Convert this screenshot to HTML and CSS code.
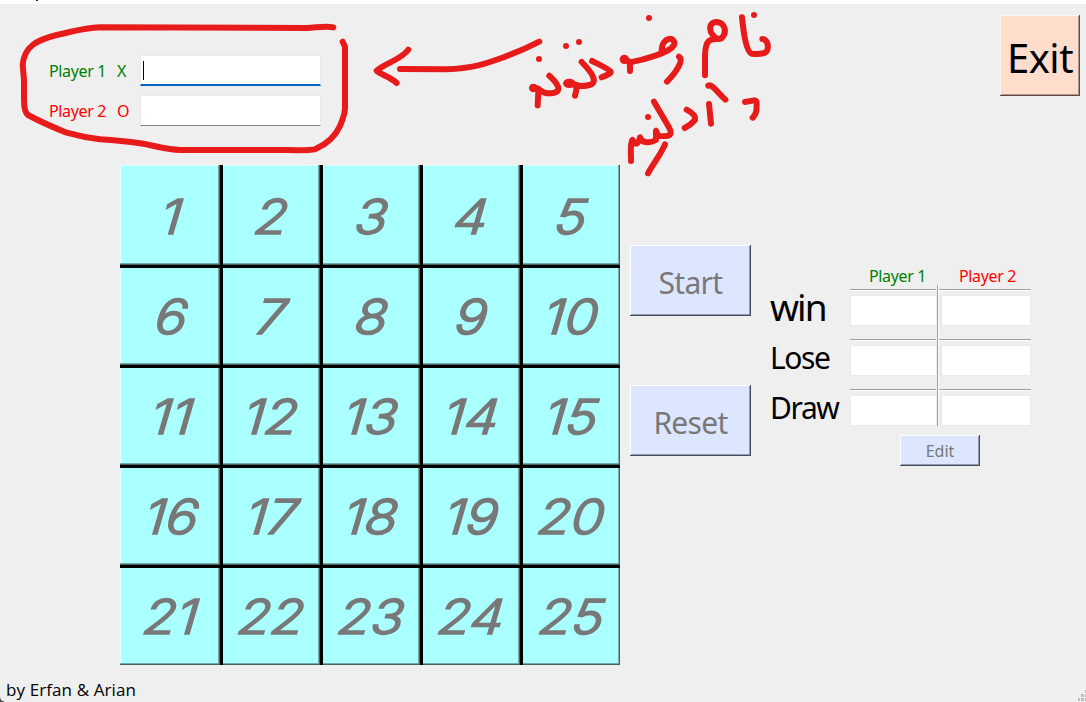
FILE: index.html
```html
<!DOCTYPE html>
<html lang="en">
<head>
<meta charset="utf-8">
<title>Tic Tac Toe</title>
<link rel="stylesheet" href="styles.css">
</head>
<body>
<div class="window">
  <div class="titlebar"><i class="title-tail"></i></div>
  <header class="top">
    <form class="names">
      <label class="name green"><span class="who">Player 1</span><span class="mark">X</span><span class="field focused"><i class="caret"></i></span></label>
      <label class="name red"><span class="who">Player 2</span><span class="mark">O</span><span class="field"></span></label>
    </form>
    <button class="btn exit"><span>Exit</span></button>
  </header>
  <main class="main">
    <div class="board">
      <div class="cell"><span>1</span></div><div class="cell"><span>2</span></div><div class="cell"><span>3</span></div><div class="cell"><span>4</span></div><div class="cell"><span>5</span></div>
      <div class="cell"><span>6</span></div><div class="cell"><span>7</span></div><div class="cell"><span>8</span></div><div class="cell"><span>9</span></div><div class="cell"><span>10</span></div>
      <div class="cell"><span>11</span></div><div class="cell"><span>12</span></div><div class="cell"><span>13</span></div><div class="cell"><span>14</span></div><div class="cell"><span>15</span></div>
      <div class="cell"><span>16</span></div><div class="cell"><span>17</span></div><div class="cell"><span>18</span></div><div class="cell"><span>19</span></div><div class="cell"><span>20</span></div>
      <div class="cell"><span>21</span></div><div class="cell"><span>22</span></div><div class="cell"><span>23</span></div><div class="cell"><span>24</span></div><div class="cell"><span>25</span></div>
    </div>
    <div class="actions">
      <button class="btn start"><span>Start</span></button>
      <button class="btn reset"><span>Reset</span></button>
    </div>
    <section class="score">
      <div class="row-names"><span class="win">win</span><span class="lose">Lose</span><span class="draw">Draw</span></div>
      <div class="table">
        <div class="heads"><span class="green">Player 1</span><span class="red">Player 2</span></div>
        <div class="pair"><i></i><i></i></div>
        <div class="pair"><i></i><i></i></div>
        <div class="pair"><i></i><i></i></div>
        <div class="divider"></div>
        <button class="btn edit"><span>Edit</span></button>
      </div>
    </section>
  </main>
  <footer class="status"><span>by Erfan &amp; Arian</span></footer>
  <i class="corner"></i>
  <svg class="grip" width="8" height="12" viewBox="0 0 8 12" fill="#bfbfbf"><path d="M7 0h1v3H7zM3 4h3v3H3zM7 4h1v3H7zM0 8h2v3H0zM3 8h3v3H3zM7 8h1v3H7z"/></svg>
  <svg class="ink" width="1086" height="702" viewBox="0 0 1086 702">
    <g transform="scale(.33333)">
      <path d="M1000 82C980 77 955 82 920 84L300 82C250 84 230 92 170 105C110 120 72 140 68 195L72 240V300Q72 336 84 345Q130 370 200 398Q250 412 300 418C350 421 380 424 420 430C470 438 500 449 540 450H860C910 451 930 451 945 448C990 428 1010 400 1020 378C1030 350 1035 345 1035 325V140L1028 125"/>
    </g>
    <g transform="translate(360) scale(.33333)">
      <path d="M120 207L260 208C340 205 380 190 430 172Q490 150 538 125M145 149C125 178 75 190 50 212C65 225 90 230 110 249"/>
      <path d="M568 227C604 260 605 280 565 280C540 280 542 262 518 262M535 275L533 316M665 186C713 235 715 258 665 258C640 258 648 248 623 250M648 258C652 275 645 280 645 287M696 183C765 217 765 215 725 232"/>
      <circle cx="618" cy="138" r="9"/><circle cx="657" cy="126" r="9"/><circle cx="537" cy="177" r="9"/><circle cx="520" cy="264" r="13"/><ellipse cx="628" cy="250" rx="19" ry="14"/>
    </g>
    <g transform="translate(600) scale(.33333)">
      <path d="M76 178C92 184 90 195 90 213M90 187C130 180 210 158 222 135C230 108 185 108 185 153M237 170C252 180 230 215 201 245M315 226V170C315 118 330 115 363 116C385 95 373 66 348 66C326 68 328 92 337 103C347 118 355 118 363 116M426 52C430 90 437 155 455 161C500 165 506 155 503 133C499 119 493 117 487 117"/>
      <path d="M325 257C335 251 350 275 376 299M327 312L333 371M260 329C280 340 288 350 285 360Q272 375 254 384M435 306L462 301Q471 301 470 309C470 330 470 342 458 353M162 305L206 380C220 405 210 410 180 408C168 405 172 398 168 392V420C150 430 125 430 120 412C118 423 112 434 105 430L97 420C90 430 93 450 93 483M195 433C185 460 160 490 144 520"/>
      <circle cx="147" cy="54" r="9"/><circle cx="462" cy="45" r="9"/><circle cx="144" cy="351" r="9"/><circle cx="73" cy="178" r="14"/>
    </g>
  </svg>
</div>
</body>
</html>
```
FILE: styles.css
```css
* { box-sizing: border-box; }
body { margin: 0; background: #efefef; font: 16px/20px "Noto Sans", sans-serif; color: #000; overflow: hidden; }
i { display: block; }
.window { position: relative; width: 1086px; height: 702px; overflow: hidden; background: #efefef; display: flex; flex-direction: column; }
.titlebar { height: 4px; flex: none; background: #fff; }
.title-tail { width: 2px; height: 1px; margin-left: 36px; background: #223; }
.green { color: #008000; }
.red { color: #f00; }
.top { height: 161px; flex: none; display: flex; justify-content: space-between; padding: 11px 6px 0 49px; }
.names { padding-top: 40px; display: flex; flex-direction: column; gap: 9px; }
.name { display: flex; height: 31px; align-items: center; }
.who { width: 68px; letter-spacing: -.35px; white-space: nowrap; }
.mark { width: 23px; }
.field { width: 181px; height: 31px; background: #fff; border: 1px solid #eaeaea; border-bottom: 1px solid #868686; }
.focused { border-bottom: 2px solid #0067c0; padding: 5px 0 0 2px; }
.caret { width: 1px; height: 19px; background: #000; }
.btn { border: 0; padding: 0; margin: 0; font: 30px/36px "Noto Sans", sans-serif; color: #787878; background: #dde6ff; display: flex; align-items: center; justify-content: center; box-shadow: inset -1px -1px #444c5c, inset 1px 1px #fff, inset -2px -2px #929bb0; }
.exit { width: 80px; height: 81px; padding-top: 4px; font-size: 40px; letter-spacing: -.5px; color: #000; background: #ffddcc; box-shadow: inset -1px -1px #5c4c44, inset 1px 1px #fff4ec, inset -2px -2px #b09488; }
.main { height: 500px; flex: none; display: flex; padding-left: 120px; }
.board { display: grid; grid-template: repeat(5, 100px) / repeat(5, 100px); }
.cell { background: #aff; display: flex; align-items: center; justify-content: center; padding: 3px 0 0 3px; color: #787878; font: italic 300 48px/60px Inter, sans-serif; box-shadow: inset 3px 3px #000, inset -1px -1px #446666, inset -2px -2px #72aaaa; }
.cell:nth-child(-n+5) { box-shadow: inset 3px 0 #000, inset -1px -1px #446666, inset -2px -2px #72aaaa, inset 0 1px #ddffff; }
.cell:nth-child(5n+1) { box-shadow: inset 0 3px #000, inset -1px -1px #446666, inset -2px -2px #72aaaa, inset 1px 0 #ddffff; }
.cell:first-child { box-shadow: inset -1px -1px #446666, inset -2px -2px #72aaaa, inset 1px 1px #ddffff; }
.cell span { -webkit-text-stroke: 1.7px #787878; stroke-linejoin: round; transform: skewX(-6deg) scaleX(1.12); }
.actions { margin-left: 10px; padding-top: 80px; display: flex; flex-direction: column; gap: 69px; }
.actions .btn { width: 121px; height: 71px; padding-top: 4px; letter-spacing: -.7px; }
.score { margin-left: 19px; display: flex; padding-top: 100px; }
.row-names { width: 80px; display: flex; flex-direction: column; padding-top: 18px; font-size: 30px; line-height: 50px; letter-spacing: -1.4px; }
.row-names span { height: 50px; white-space: nowrap; }
.row-names .win { font-size: 37px; line-height: 48px; letter-spacing: -2px; }
.table { position: relative; width: 181px; }
.heads { display: flex; height: 24px; line-height: 22px; padding-left: 19px; letter-spacing: -.35px; }
.heads span { width: 90px; flex: none; white-space: nowrap; }
.pair { display: flex; height: 50px; border-top: 1px solid #9f9f9f; box-shadow: inset 0 1px #fff; padding-top: 5px; }
.pair i { width: 90px; height: 31px; background: #fff; border: 1px solid #eaeaea; }
.pair i + i { width: 91px; border-left-width: 2px; }
.divider { position: absolute; left: 86px; top: 20px; width: 3px; height: 141px; border-left: 1px solid #efefef; background: linear-gradient(90deg, #9f9f9f 50%, #fff 50%); }
.edit { width: 80px; height: 31px; font-size: 16px; line-height: 20px; margin: -4px 0 0 50px; }
.status { padding: 15px 0 0 6px; font: 17px/20px "Open Sans", sans-serif; letter-spacing: .1px; white-space: nowrap; }
.corner { position: absolute; left: -4px; bottom: -4px; width: 9px; height: 9px; background: #444; clip-path: polygon(0 0, 45% 0, 55% 35%, 100% 56%, 100% 100%, 0 100%); }
.grip { position: absolute; left: 1078px; top: 690px; }
.ink { position: absolute; left: 0; top: 0; pointer-events: none; fill: none; stroke: #e81b1b; stroke-width: 18; stroke-linecap: round; stroke-linejoin: round; }
.ink circle, .ink ellipse { fill: #e81b1b; stroke: none; }
```
